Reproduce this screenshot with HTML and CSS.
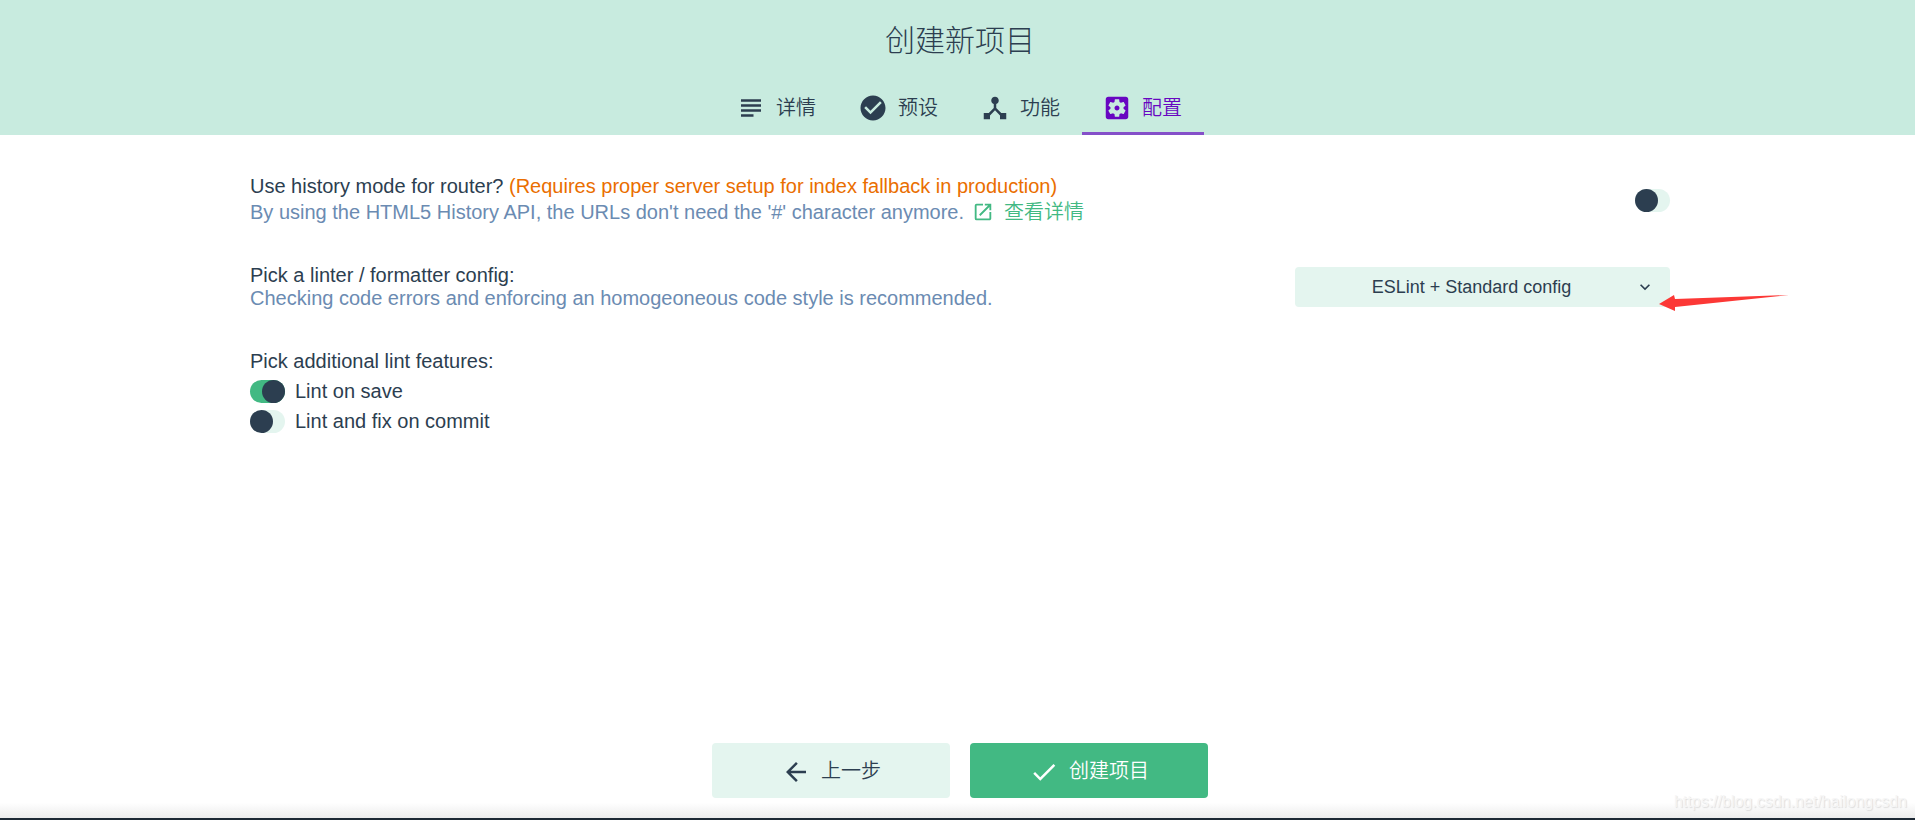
FILE: index.html
```html
<!DOCTYPE html>
<html lang="zh-CN">
<head>
<meta charset="utf-8">
<title>创建新项目</title>
<link rel="stylesheet" href="styles.css">
</head>
<body>
<div class="page">
  <header class="header">
    <h1 class="title">创建新项目</h1>
    <nav class="tabs">
      <button class="tab" type="button">
        <svg class="icon" viewBox="0 0 24 24"><path d="M14 17H4v2h10v-2zm6-8H4v2h16V9zM4 15h16v-2H4v2zM4 5v2h16V5H4z"/></svg>
        <span>详情</span>
      </button>
      <button class="tab" type="button">
        <svg class="icon" viewBox="0 0 24 24"><path d="M12 2C6.48 2 2 6.48 2 12s4.48 10 10 10 10-4.480 10-10S17.520 2 12 2zm-2 15l-5-5 1.410-1.410L10 14.170l7.590-7.590L19 8l-9 9z"/></svg>
        <span>预设</span>
      </button>
      <button class="tab" type="button">
        <svg class="icon" viewBox="0 0 24 24"><path d="M17 16l-4-4V8.820C14.160 8.400 15 7.300 15 6c0-1.660-1.340-3-3-3S9 4.340 9 6c0 1.300.84 2.400 2 2.820V12l-4 4H3v5h5v-3.050l4-4.200 4 4.200V21h5v-5h-4z"/></svg>
        <span>功能</span>
      </button>
      <button class="tab tab-active" type="button">
        <svg class="icon" viewBox="0 0 24 24"><path d="M12 10c-1.100 0-2 .9-2 2s.9 2 2 2 2-.9 2-2-.9-2-2-2zm7-7H5c-1.110 0-2 .9-2 2v14c0 1.100.89 2 2 2h14c1.110 0 2-.9 2-2V5c0-1.100-.89-2-2-2zm-1.750 9c0 .23-.02.46-.05.68l1.480 1.160c.13.11.17.3.08.45l-1.400 2.420c-.09.15-.27.21-.43.15l-1.740-.7c-.36.28-.76.51-1.180.69l-.26 1.850c-.03.17-.18.3-.35.3h-2.800c-.17 0-.32-.13-.35-.29l-.26-1.850c-.43-.18-.82-.41-1.180-.69l-1.740.7c-.16.06-.34 0-.43-.15l-1.400-2.420c-.09-.15-.05-.34.08-.45l1.480-1.160c-.03-.23-.05-.46-.05-.69s.02-.46.05-.68l-1.480-1.160c-.13-.11-.17-.3-.08-.45l1.400-2.420c.09-.15.27-.21.43-.15l1.740.7c.36-.28.76-.51 1.180-.69l.26-1.850c.03-.17.18-.3.35-.3h2.800c.17 0 .32.13.35.29l.26 1.850c.43.18.82.41 1.180.69l1.740-.7c.16-.06.34 0 .43.15l1.400 2.420c.09.15.05.34-.08.45l-1.480 1.160c.03.23.05.46.05.69z"/></svg>
        <span>配置</span>
      </button>
    </nav>
  </header>

  <main class="content">
    <section class="prompt">
      <div class="prompt-text">
        <label for="history">Use history mode for router? <span class="warning">(Requires proper server setup for index fallback in production)</span></label>
        <div class="description description-link">
          <span>By using the HTML5 History API, the URLs don't need the '#' character anymore.</span>
          <a class="link" href="#">
            <svg class="link-icon" viewBox="0 0 24 24"><path d="M19 19H5V5h7V3H5a2 2 0 0 0-2 2v14a2 2 0 0 0 2 2h14c1.100 0 2-.9 2-2v-7h-2v7zM14 3v2h3.590l-9.830 9.830 1.410 1.410L19 6.410V10h2V3h-7z"/></svg>
            <span>查看详情</span>
          </a>
        </div>
      </div>
      <input class="switch" id="history" type="checkbox">
    </section>

    <section class="prompt">
      <div class="prompt-text">
        <label for="linter">Pick a linter / formatter config:</label>
        <div class="description">Checking code errors and enforcing an homogeoneous code style is recommended.</div>
      </div>
      <div class="select-wrap">
        <select class="select" id="linter">
          <option>ESLint + Standard config</option>
        </select>
        <svg class="chevron" viewBox="0 0 24 24"><path d="M7.410 8.590L12 13.170l4.590-4.580L18 10l-6 6-6-6z"/></svg>
        <svg class="pointer" viewBox="0 0 130 16"><path d="M0 9L15 0l1 4L130 0 16 12v4z"/></svg>
      </div>
    </section>

    <section class="features">
      <div>Pick additional lint features:</div>
      <label class="feature"><input class="switch" type="checkbox" checked>Lint on save</label>
      <label class="feature"><input class="switch" type="checkbox">Lint and fix on commit</label>
    </section>
  </main>

  <footer class="actions">
    <button class="button" type="button">
      <svg class="button-icon" viewBox="0 0 24 24"><path d="M20 11H7.830l5.590-5.590L12 4l-8 8 8 8 1.410-1.410L7.830 13H20v-2z"/></svg>
      <span>上一步</span>
    </button>
    <button class="button button-primary" type="button">
      <svg class="button-icon" viewBox="0 0 24 24"><path d="M9 16.170L4.830 12l-1.420 1.410L9 19 21 7l-1.410-1.410z"/></svg>
      <span>创建项目</span>
    </button>
  </footer>
  <div class="status-bar"></div>
  <div class="watermark">https://blog.csdn.net/hailongcsdn</div>
</div>
</body>
</html>
```
FILE: styles.css
```css
* {
  box-sizing: border-box;
}

body {
  margin: 0;
  color: #2c3e50;
  background: #fff;
  font: 20px/23px "Liberation Sans", "Noto Sans CJK SC", sans-serif;
}

button,
select {
  border: 0;
  color: inherit;
  font: inherit;
  cursor: pointer;
}

svg {
  flex: none;
  fill: currentColor;
}

.page {
  position: relative;
  display: flex;
  flex-direction: column;
  min-height: 100vh;
}

.header {
  padding: 20px 0 0 5px;
  background: #c8ebdf;
}

.title {
  margin: 0 0 20px;
  font-size: 30px;
  font-weight: 300;
  line-height: 41px;
  text-align: center;
}

.tabs {
  display: flex;
  justify-content: center;
}

.tab {
  display: flex;
  align-items: center;
  gap: 10px;
  width: 122px;
  height: 54px;
  padding: 3px 0 0 20px;
  border-bottom: 3px solid transparent;
  background: none;
  font-weight: 350;
}

.tab-active {
  border-color: #8550c9;
  color: #6806c1;
}

.icon {
  width: 30px;
  height: 30px;
}

.content {
  flex: 1;
  display: flex;
  flex-direction: column;
  gap: 38px;
  width: 100%;
  max-width: 1425px;
  margin: 0 auto;
  padding: 40px 0 0 5px;
}

.prompt {
  display: flex;
  align-items: center;
  justify-content: space-between;
}

.warning {
  color: #ea6e00;
}

.description {
  color: #6b8bb2;
}

.description-link {
  display: flex;
  align-items: center;
  gap: 8px;
  height: 28px;
}

.link {
  display: flex;
  align-items: center;
  gap: 10px;
  color: #42b983;
  font-weight: 350;
  text-decoration: none;
}

.link-icon {
  width: 22px;
  height: 22px;
}

.switch {
  flex: none;
  width: 35px;
  height: 23px;
  margin: 0;
  border-radius: 12px;
  background: #e4f5ef;
  appearance: none;
  cursor: pointer;
}

.switch::before {
  content: "";
  display: block;
  width: 23px;
  height: 23px;
  border-radius: 50%;
  background: #2c3e50;
}

.switch:checked {
  background: #42b983;
}

.switch:checked::before {
  margin-left: auto;
}

.select-wrap {
  position: relative;
  width: 375px;
}

.select {
  width: 100%;
  height: 40px;
  padding: 0 28px 0 6px;
  border-radius: 4px;
  background: #e4f5ef;
  font-size: 18px;
  text-align: center;
  text-align-last: center;
  appearance: none;
}

.chevron {
  position: absolute;
  top: 10px;
  right: 15px;
  width: 20px;
  height: 20px;
  pointer-events: none;
}

.pointer {
  position: absolute;
  top: 28px;
  left: 100%;
  width: 130px;
  height: 16px;
  margin-left: -11px;
  fill: #fc3836;
}

.features {
  display: flex;
  flex-direction: column;
  gap: 7px;
  padding-top: 2px;
}

.feature {
  display: flex;
  align-items: center;
  gap: 10px;
}

.actions {
  display: flex;
  justify-content: center;
  gap: 20px;
  padding: 20px 0 20px 5px;
  background: linear-gradient(transparent 84%, #ececec);
}

.button {
  display: flex;
  align-items: center;
  justify-content: center;
  gap: 10px;
  width: 238px;
  height: 55px;
  padding: 2px 0 0;
  border-radius: 4px;
  background: #e4f5ef;
  font-weight: 350;
}

.button-primary {
  background: #42b983;
  color: #fff;
}

.button-icon {
  width: 30px;
  height: 30px;
}

.status-bar {
  height: 2px;
  background: #1d2935;
}

.watermark {
  position: absolute;
  right: 8px;
  bottom: 7px;
  color: #f6f6f6;
  font-size: 16px;
  text-shadow: 1px 1px 1px #ddd;
}
```
